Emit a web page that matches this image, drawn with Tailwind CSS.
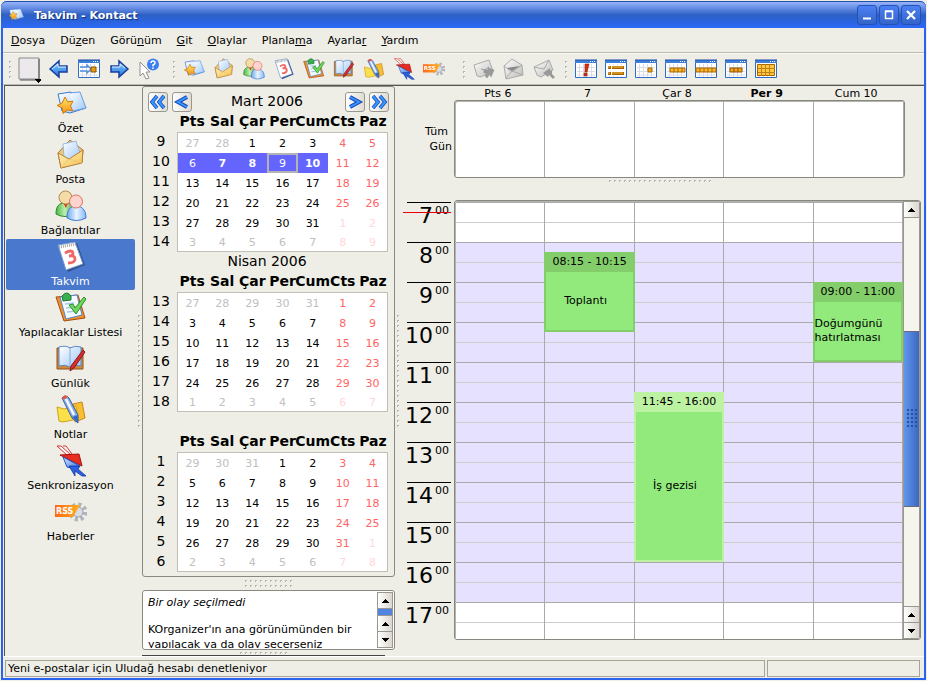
<!DOCTYPE html>
<html lang="tr">
<head>
<meta charset="utf-8">
<title>Takvim - Kontact</title>
<script src="https://cdn.jsdelivr.net/npm/@tailwindcss/browser@4"></script>
</head>
<body class="h-screen overflow-hidden bg-[#eeeee6] p-px text-[11px] leading-[15px] text-black [font-family:'DejaVu_Sans',sans-serif]">

<!-- Shared icon symbols -->
<svg class="absolute size-0" aria-hidden="true">
  <defs>
    <pattern id="dots" width="5" height="5" patternUnits="userSpaceOnUse"><path d="M0 0h2v1h-1v1h-1z" fill="#b4b4ac"/><path d="M1 1h1v1h-1z" fill="#fff"/></pattern>
    <linearGradient id="gBlue" x1="0" y1="0" x2="1" y2="1"><stop offset="0" stop-color="#fff"/><stop offset="1" stop-color="#9cc8f8"/></linearGradient>
    <linearGradient id="gArrow" x1="0" y1="0" x2="0" y2="1"><stop offset="0" stop-color="#8cd0ff"/><stop offset="1" stop-color="#1c74e0"/></linearGradient>
    <linearGradient id="gGold" x1="0" y1="0" x2="1" y2="1"><stop offset="0" stop-color="#fff4c0"/><stop offset="1" stop-color="#f4c050"/></linearGradient>
    <linearGradient id="gStar" x1="0" y1="0" x2="0" y2="1"><stop offset="0" stop-color="#ffe860"/><stop offset="1" stop-color="#f89018"/></linearGradient>
    <linearGradient id="gGreen" x1="0" y1="0" x2="1" y2="0"><stop offset="0" stop-color="#4cb848"/><stop offset=".5" stop-color="#c0f0b0"/><stop offset="1" stop-color="#48a840"/></linearGradient>
    <linearGradient id="gBody" x1="0" y1="0" x2="1" y2="0"><stop offset="0" stop-color="#70a8f0"/><stop offset=".5" stop-color="#e8f4ff"/><stop offset="1" stop-color="#88b8f4"/></linearGradient>
    <linearGradient id="gOrange" x1="0" y1="0" x2="1" y2="0"><stop offset="0" stop-color="#ff6818"/><stop offset="1" stop-color="#ffb020"/></linearGradient>
    <linearGradient id="gGray" x1="0" y1="0" x2="1" y2="1"><stop offset="0" stop-color="#fff"/><stop offset="1" stop-color="#bcbcb8"/></linearGradient>
    <linearGradient id="gSync" x1="0" y1="0" x2="1" y2="1"><stop offset="0" stop-color="#e0f0ff"/><stop offset="1" stop-color="#3070e8"/></linearGradient>
  </defs>

  <symbol id="summary" viewBox="0 0 32 32">
    <path d="M3 6l13-2 2 4 4-2 9 14-16 5-8-2z" fill="url(#gBlue)" stroke="#3a78d0"/>
    <path d="M15 5l10-1 6 16-13 3" fill="url(#gBlue)" stroke="#6a9ce0"/>
    <path d="M10 9l2.600 4.800 5.400-.6-2.600 4.800 2.400 5-5.500-1-4.300 3.500-.7-5.500-5.300-2.500 5.200-2.500z" fill="url(#gStar)" stroke="#d07810"/>
  </symbol>
  <symbol id="mail" viewBox="0 0 32 32">
    <path d="M3 14L15 1l13 10-1 12-21 6z" fill="#f0c878" stroke="#a87838"/>
    <path d="M8 5l13-3 4 12-10 8-6-4z" fill="url(#gBlue)" stroke="#88acdc" stroke-width=".8"/>
    <path d="M3 14l11 6 14-9-1 13-21 5z" fill="url(#gGold)" stroke="#b88038"/>
    <path d="M6 29l8-9 13 4" fill="none" stroke="#ecc068" stroke-width=".8"/>
  </symbol>
  <symbol id="contacts" viewBox="0 0 32 32">
    <path d="M1 24c0-8 3-11 9-11s9 3 9 11q-9 5-18 0z" fill="url(#gGreen)" stroke="#2c8828"/>
    <path d="M8 13l3 5 2-5" fill="#e83820"/>
    <circle cx="10.500" cy="7.500" r="6.500" fill="#f4dca8" stroke="#b88848"/>
    <path d="M12 28c0-8 3-12 9-12s10 4 10 12q-10 5-19 0z" fill="url(#gBody)" stroke="#3c78d8"/>
    <circle cx="21" cy="11.500" r="6.500" fill="#ffd4d0" stroke="#e07060"/>
  </symbol>
  <symbol id="calendar" viewBox="0 0 32 32">
    <path d="M5 5l17-3 8 22-17 7z" fill="#34508c"/>
    <path d="M3 4l17-3 8 22-17 6z" fill="#fff" stroke="#7098d0"/>
    <path d="M4 6l17-3" stroke="#a8a8a8" stroke-width="3" stroke-dasharray="1 1"/>
    <path d="M10 12q7-4 8 0 0 3-4 3 6-1 6 3 0 4-7 4" fill="none" stroke="#f06868" stroke-width="2.800"/>
  </symbol>
  <symbol id="todo" viewBox="0 0 32 32">
    <path d="M1 5l22-2 7 23-21 3z" fill="#f0902c" stroke="#a84c10"/>
    <path d="M5 5l17-2 5 20-16 4z" fill="#f4faff" stroke="#5088d0"/>
    <path d="M10 12l9-1M11 16l10-1M12 20l10-1" stroke="#a8c8e8" stroke-width="1.500"/>
    <path d="M7 4q5-6 9 0v4l-8 1z" fill="#38b050" stroke="#207838"/>
    <path d="M14 13l4-1 2 4 9-11 2 2-10 15z" fill="#70d858" stroke="#2c9030"/>
  </symbol>
  <symbol id="journal" viewBox="0 0 32 32">
    <path d="M2 5h26v21H2z" fill="#d08838" stroke="#905018"/>
    <path d="M4 4q7-2 11 1 5-3 11-1v19q-6-2-11 1-5-3-11-1z" fill="url(#gBlue)" stroke="#5888c8"/>
    <path d="M15 5v19" stroke="#88acd8"/>
    <path d="M28 7l2 2-11 16-4 3 1-5z" fill="#d83030" stroke="#8c1818"/>
  </symbol>
  <symbol id="notes" viewBox="0 0 32 32">
    <path d="M18 10l9-2 3 16-10 4z" fill="#f8c030" stroke="#c88818"/>
    <path d="M2 13l7 2 12-3 2 13-15 3-4-1z" fill="#fce048" stroke="#d0a020"/>
    <path d="M7 4q3-4 7 0l9 17 0 8-6-5z" fill="#88acec" stroke="#3c5c98"/>
    <path d="M11 5l8 16" stroke="#f0f8ff" stroke-width="2.500"/>
    <path d="M7 5q1-5 6-3l-3 3z" fill="#f05038"/>
    <path d="M17 23l6-2v8z" fill="#3868c0"/>
  </symbol>
  <symbol id="sync" viewBox="0 0 32 32">
    <path d="M2 1h4l10 9h-4zM8 1h3l6 8" fill="#fff" stroke="#d83030"/>
    <path d="M5 10l19-1 3 12z" fill="#e82c20" stroke="#a81010"/>
    <path d="M8 12l17 9-3 2-6 0-4-1z" fill="url(#gSync)" stroke="#2050c0"/>
    <path d="M14 21l11 0-2 3 8 7h-4l-7-5v5z" fill="#2c60e0" stroke="#1038a0" stroke-width=".8"/>
  </symbol>
  <symbol id="news" viewBox="0 0 32 32">
    <circle cx="23" cy="16" r="7" fill="none" stroke="#b0b4bc" stroke-width="5" stroke-dasharray="3 2.500"/>
    <circle cx="23" cy="16" r="5" fill="#d8dce4" stroke="#9ca0a8"/>
    <path d="M0 9h25l-7 12H0z" fill="url(#gOrange)"/>
    <text x="1" y="18" font-size="8" font-weight="bold" fill="#fff" font-family="DejaVu Sans">RSS</text>
  </symbol>
  <symbol id="newdoc" viewBox="0 0 24 28"><path d="M2 1h20v21H2z" fill="#ece8ec" stroke="#888"/><path d="M22 2v21H3" fill="none" stroke="#555"/><path d="M18 22h7v1h-1v1h-1v1h-1v1h-1v-1h-1v-1h-1v-1h-1z"/></symbol>
  <symbol id="back" viewBox="0 0 22 22"><path d="M2 11l9-8v5h8v6h-8v5z" fill="url(#gArrow)" stroke="#1c3c9c" stroke-width="1.500"/><path d="M4 11l6-5v3h8" fill="none" stroke="#d8f0ff"/></symbol>
  <symbol id="forward" viewBox="0 0 22 22"><path d="M20 11l-9-8v5H3v6h8v5z" fill="url(#gArrow)" stroke="#1c3c9c" stroke-width="1.500"/><path d="M4 9h8V6l5 4" fill="none" stroke="#d8f0ff"/></symbol>
  <symbol id="frame" viewBox="0 0 22 20"><path d="M.5 1.500h21v17H.5z" fill="#fff" stroke="#2c6cc4"/><path d="M0 1h22v3H0z" fill="#3c80dc"/><path d="M0 1h22" stroke="#1c4ca4"/><path d="M15 2.500h1M17 2.500h1M19 2.500h1" stroke="#fff"/><path d="M4.500 5v13M8.500 5v13M12.500 5v13M16.500 5v13M2 8.500h18M2 12.500h18M2 16h18" stroke="#dcdce4"/></symbol>
  <symbol id="today" viewBox="0 0 22 20"><use href="#frame"/><path d="M2 8h7V6l4 4-4 4v-2H2" fill="none" stroke="#5090e0" stroke-width="1.500"/><path d="M13 8h5v5h-5z" fill="#e89c18" stroke="#885000"/></symbol>
  <symbol id="whatsthis" viewBox="0 0 22 22"><path d="M2 4v14l3-3 3 6 3-1-3-6h4z" fill="#fff" stroke="#909090"/><circle cx="15" cy="6.500" r="6" fill="#3c80f0"/><path d="M13 5q0-2 2-2t2 2q0 1-2 2v1.500M15 9.500v1.500" fill="none" stroke="#fff" stroke-width="1.500"/></symbol>
  <symbol id="gforward" viewBox="0 0 22 22"><path d="M1 7l15-5 4 11-12 6-4-1z" fill="url(#gGray)" stroke="#aaa"/><path d="M8 11l4 1 4-3" fill="none" stroke="#999"/><path d="M11 12h5l-1-2 6 2-3 7-1-3-3 4-2-2 2-3h-3z" fill="#999" stroke="#888" stroke-width=".5"/></symbol>
  <symbol id="gmail" viewBox="0 0 22 22"><path d="M1 8l8-7 10 6 1 10-17 4z" fill="url(#gGray)" stroke="#aaa"/><path d="M1 8l8 6 10-7M3 20l6-7 11 4" fill="none" stroke="#aaa"/><path d="M4 10l13-2-8 5z" fill="#888"/></symbol>
  <symbol id="greply" viewBox="0 0 22 22"><path d="M1 9l15-7 4 10-12 7-4-2z" fill="url(#gGray)" stroke="#aaa"/><path d="M1 9l10 2 5-9" fill="none" stroke="#aaa"/><path d="M10 15l7-5v3l2-1v4l3 3-2 2-4-4-1 2z" fill="#999"/></symbol>
  <symbol id="vnext" viewBox="0 0 22 20"><use href="#frame"/><path d="M10 5h4l-2 8h-2zM9 14h3v3H9z" fill="#e03010" stroke="#801808" stroke-width=".6"/></symbol>
  <symbol id="vlist" viewBox="0 0 22 20"><use href="#frame"/><path d="M2 6h18v11H2z" fill="#fff"/><path d="M3 8.500h3M7 8.500h12M3 14.500h3M7 14.500h12" stroke="#a86400" stroke-width="3"/><path d="M3 8h2M7 8h11M3 14h2M7 14h11" stroke="#fcc040"/></symbol>
  <symbol id="vday" viewBox="0 0 22 20"><use href="#frame"/><path d="M13 9h4v4h-4z" fill="#f0a820" stroke="#a86400"/></symbol>
  <symbol id="vwork" viewBox="0 0 22 20"><use href="#frame"/><path d="M5 9h15v4H5z" fill="#f8b830" stroke="#a86400"/><path d="M9 9v4M13 9v4M17 9v4" stroke="#a86400"/></symbol>
  <symbol id="vweek" viewBox="0 0 22 20"><use href="#frame"/><path d="M1 9h20v4H1z" fill="#f8b830" stroke="#a86400"/><path d="M5 9v4M9 9v4M13 9v4M17 9v4" stroke="#a86400"/></symbol>
  <symbol id="vnextdays" viewBox="0 0 22 20"><use href="#frame"/><path d="M5 9h12v4H5z" fill="#f0a820" stroke="#905000"/><path d="M9 9v4M13 9v4" stroke="#905000"/></symbol>
  <symbol id="vmonth" viewBox="0 0 22 20"><use href="#frame"/><path d="M2.500 5.500h17v11h-17z" fill="#ffc840" stroke="#a86400"/><path d="M6.500 5v12M10.500 5v12M14.500 5v12M3 9.500h17M3 13.500h17" stroke="#c08018"/></symbol>
  <symbol id="chev2" viewBox="0 0 18 18"><path d="M8 3L3 9l5 6M15 3l-5 6 5 6" fill="none" stroke="#1848b8" stroke-width="3.600"/><path d="M8 3L3 9l5 6M15 3l-5 6 5 6" fill="none" stroke="#3898ff" stroke-width="2"/></symbol>
  <symbol id="chev" viewBox="0 0 18 18"><path d="M14 4L5 9l9 5" fill="none" stroke="#1848b8" stroke-width="4"/><path d="M14 4L5 9l9 5" fill="none" stroke="#3898ff" stroke-width="2"/></symbol>
  <symbol id="up" viewBox="0 0 7 4"><path d="M3 0h1v1h1v1h1v1h1v1H0V3h1V2h1V1h1z"/></symbol>
  <symbol id="down" viewBox="0 0 7 4"><path d="M3 4h1V3h1V2h1V1h1V0H0v1h1v1h1v1h1z"/></symbol>
</svg>

<div class="flex h-full flex-col rounded-t-md bg-[#2a62f0]">
  <header class="flex h-[27px] shrink-0 items-center gap-[2px] rounded-t-md border-t border-[#2050a8] bg-linear-to-b from-[#98b4fc] via-[#2c60c4] to-[#2c68f8] pr-[5px] pl-[7px] text-white">
    <svg class="h-[16px] w-[16px]"><use href="#summary"/></svg>
    <h1 class="grow pl-[8px] font-bold [text-shadow:1px_1px_1px_#103080]">Takvim - Kontact</h1>
    <button aria-label="Küçült" class="flex size-[20px] items-center justify-center rounded-[3px] border border-[#2450b8] bg-linear-to-b from-[#4c80f4] to-[#3464c8]"><svg class="size-[12px]"><path d="M2 9.500h8" stroke="#fff" stroke-width="2"/></svg></button>
    <button aria-label="Büyüt" class="flex size-[20px] items-center justify-center rounded-[3px] border border-[#2450b8] bg-linear-to-b from-[#4c80f4] to-[#3464c8]"><svg class="size-[12px]"><path d="M2.500 2.500h7v7h-7zM2 2h8" fill="none" stroke="#fff" stroke-width="1.500"/></svg></button>
    <button aria-label="Kapat" class="flex size-[20px] items-center justify-center rounded-[3px] border border-[#2450b8] bg-linear-to-b from-[#4c80f4] to-[#3464c8]"><svg class="size-[12px]"><path d="M2 2l8 8M10 2l-8 8" stroke="#fff" stroke-width="2.200"/></svg></button>
  </header>

  <div class="mx-[2px] mb-[2px] flex min-h-0 grow flex-col bg-[#eeeee6]">
    <nav class="flex h-[25px] shrink-0 items-center gap-[15px] border-b border-[#bcbcb2] pl-[8px]">
      <button><u>D</u>osya</button><button>Dü<u>z</u>en</button><button>Görü<u>n</u>üm</button><button><u>G</u>it</button><button><u>O</u>laylar</button><button>Planla<u>m</u>a</button><button>Ayarla<u>r</u></button><button><u>Y</u>ardım</button>
    </nav>

    <div id="toolbar" class="flex h-[32px] shrink-0 items-center border-t border-b border-t-[#f8f8f4] border-b-[#bcbcb2]"></div>

    <div class="ml-px flex min-h-0 grow border-t border-l border-[#555]">
      <aside id="sidebar" class="w-[130px] shrink-0 pl-px"></aside>
      <svg class="mr-[2px] ml-[3px] h-[112px] w-[2px] shrink-0 self-center overflow-hidden"><rect width="2" height="112" fill="url(#dots)"/></svg>

      <section class="flex w-[253px] shrink-0 flex-col">
        <div id="months" class="shrink-0 rounded-[3px] border border-[#888a80] px-[2px] pt-[5px] pb-[4px]"></div>
        <svg class="my-[3px] h-[7px] w-[47px] shrink-0 self-center"><rect width="47" height="7" fill="url(#dots)"/></svg>
        <div class="flex min-h-0 grow overflow-hidden rounded-[3px] border border-[#888a80] bg-white p-px">
          <div class="h-full grow overflow-hidden pt-[3px] pl-[4px]">
            <p class="mb-[12px] italic">Bir olay seçilmedi</p>
            <p>KOrganizer'ın ana görünümünden bir yapılacak ya da olay seçerseniz</p>
          </div>
          <div class="flex w-[16px] shrink-0 flex-col border border-[#989890] bg-[#989890]">
            <button aria-label="Yukarı" class="flex h-[15px] shrink-0 items-center justify-center bg-linear-to-r from-white to-[#dcd6ce]"><svg class="h-[4px] w-[7px]"><use href="#up"/></svg></button>
            <div class="my-px grow bg-[#5084e0]"></div>
            <button aria-label="Yukarı" class="mb-px flex h-[15px] shrink-0 items-center justify-center bg-linear-to-r from-white to-[#dcd6ce]"><svg class="h-[4px] w-[7px]"><use href="#up"/></svg></button>
            <button aria-label="Aşağı" class="flex h-[15px] shrink-0 items-center justify-center bg-linear-to-r from-white to-[#dcd6ce]"><svg class="h-[4px] w-[7px]"><use href="#down"/></svg></button>
          </div>
        </div>
        <div class="mr-[10px] flex h-[6px] shrink-0 justify-center border-b border-[#444] pt-[2px]"><svg class="h-[2px] w-[47px]"><rect width="47" height="2" fill="url(#dots)"/></svg></div>
      </section>

      <svg class="mr-px ml-[2px] h-[112px] w-[2px] shrink-0 self-center overflow-hidden"><rect width="2" height="112" fill="url(#dots)"/></svg>

      <main class="flex min-w-0 grow flex-col pr-[3px] pb-[16px]">
        <div class="mr-[20px] ml-[53px] grid h-[14px] shrink-0 grid-cols-5 text-center leading-[16px]">
          <span>Pts 6</span><span>7</span><span>Çar 8</span><b>Per 9</b><span>Cum 10</span>
        </div>
        <div class="mr-[16px] flex h-[78px] shrink-0">
          <div class="flex w-[54px] shrink-0 flex-col items-end justify-center pr-[2px]"><span class="pr-[4px]">Tüm</span><span>Gün</span></div>
          <div class="grid grow grid-cols-5 rounded-[3px] border border-[#85887e] bg-white shadow-[inset_1px_1px_0_#b4b4ac]">
            <div class="border-r border-[#aaa]"></div><div class="border-r border-[#aaa]"></div><div class="border-r border-[#aaa]"></div><div class="border-r border-[#aaa]"></div><div class="border-r border-[#aaa]"></div>
          </div>
        </div>
        <svg class="mt-[2px] mb-[18px] h-[2px] w-[104px] shrink-0 self-center"><rect width="104" height="2" fill="url(#dots)"/></svg>
        <div class="flex min-h-0 grow">
          <div class="relative w-[54px] shrink-0 overflow-hidden pt-[2px] pr-[3px] pl-[7px]">
            <div id="hours"></div>
            <div class="absolute top-[12px] right-[3px] left-[3px] h-px bg-red-600"></div>
          </div>
          <div class="flex min-w-0 grow overflow-hidden rounded-[3px] border border-[#85887e] bg-white">
            <div id="agenda" class="grid min-w-0 grow grid-cols-5 overflow-hidden border-t border-l border-[#b4b4ac]"></div>
            <div class="flex w-[17px] shrink-0 flex-col border-x border-t border-[#989890] bg-[#f5f5ee]">
              <button aria-label="Yukarı" class="flex h-[16px] shrink-0 items-center justify-center border-b border-[#989890] bg-linear-to-r from-white to-[#dcd6ce]"><svg class="h-[4px] w-[7px]"><use href="#up"/></svg></button>
              <div class="grow-[113] basis-0"></div>
              <div class="flex h-[176px] shrink-0 items-center justify-center border-y border-[#686878] bg-linear-to-r from-[#6096ec] to-[#3c68c0]"><svg class="h-[20px] w-[12px]"><path d="M1 1h11M1 5h11M1 9h11M1 13h11M1 17h11" stroke="#2850a0" stroke-width="2" stroke-dasharray="2 2"/></svg></div>
              <div class="grow-[99] basis-0"></div>
              <button aria-label="Yukarı" class="flex h-[17px] shrink-0 items-center justify-center border-y border-[#989890] bg-linear-to-r from-white to-[#dcd6ce]"><svg class="h-[4px] w-[7px]"><use href="#up"/></svg></button>
              <button aria-label="Aşağı" class="flex h-[16px] shrink-0 items-center justify-center border-b border-[#989890] bg-linear-to-r from-white to-[#dcd6ce]"><svg class="h-[4px] w-[7px]"><use href="#down"/></svg></button>
            </div>
          </div>
        </div>
      </main>
    </div>

    <footer class="flex h-[22px] shrink-0 gap-[2px] border-t border-white pt-[3px] pr-[4px] pb-px pl-[2px]">
      <div class="grow border border-[#a4a49a] px-[2px]">Yeni e-postalar için Uludağ hesabı denetleniyor</div>
      <div class="w-[153px] shrink-0 border border-[#a4a49a]"></div>
    </footer>
  </div>
</div>

<script>
const el = id => document.getElementById(id);

// Toolbar
const cell = (id, label, cls) => `<button aria-label="${label}" class="flex w-[30px] shrink-0 items-center justify-center"><svg class="${cls}"><use href="#${id}"/></svg></button>`;
const grip = cls => `<svg class="h-[17px] w-[2px] shrink-0 ${cls}"><rect width="2" height="17" fill="url(#dots)"/></svg>`;
const M = 'size-[22px]', W = 'h-[20px] w-[22px]';
el('toolbar').innerHTML =
  grip('mr-[3px] ml-[6px]') +
  cell('newdoc', 'Yeni', 'h-[28px] w-[24px] mt-[4px]') + cell('back', 'Geri', M) + cell('today', 'Bugün', W) + cell('forward', 'İleri', M) + cell('whatsthis', 'Bu nedir?', M) +
  grip('mr-[4px] ml-[9px]') +
  [['summary', 'Özet'], ['mail', 'Posta'], ['contacts', 'Bağlantılar'], ['calendar', 'Takvim'], ['todo', 'Yapılacaklar'], ['journal', 'Günlük'], ['notes', 'Notlar'], ['sync', 'Senkronizasyon'], ['news', 'Haberler']].map(([i, l]) => cell(i, l, M)).join('') +
  grip('mr-[4px] ml-[14px]') +
  cell('gforward', 'İlet', M) + cell('gmail', 'Posta', M) + cell('greply', 'Yanıtla', M) +
  grip('mr-[4px] ml-[6px]') +
  [['vnext', 'Sıradaki'], ['vlist', 'Liste'], ['vday', 'Gün'], ['vwork', 'İş haftası'], ['vweek', 'Hafta'], ['vnextdays', 'Sonraki günler'], ['vmonth', 'Ay']].map(([i, l]) => cell(i, l, W)).join('');

// Sidebar
el('sidebar').innerHTML = [['summary', 'Özet'], ['mail', 'Posta'], ['contacts', 'Bağlantılar'], ['calendar', 'Takvim'], ['todo', 'Yapılacaklar Listesi'], ['journal', 'Günlük'], ['notes', 'Notlar'], ['sync', 'Senkronizasyon'], ['news', 'Haberler']]
  .map(([i, l]) => `<a href="#${i}" class="flex h-[51px] flex-col items-center gap-px rounded-[2px] pt-[2px] whitespace-nowrap ${l === 'Takvim' ? 'bg-[#4a78cc] text-white' : ''}"><svg class="size-[32px] shrink-0"><use href="#${i}"/></svg>${l}</a>`).join('');

// Month navigators: [title, first week, days before the 1st, previous month's length, length]
const nav = (id, label, cls) => `<button aria-label="${label}" class="flex size-[20px] items-center justify-center rounded-[3px] border border-[#98988e] bg-linear-to-r from-white to-[#e0dcd4]"><svg class="size-[18px] ${cls}"><use href="#${id}"/></svg></button>`;
el('months').innerHTML = [['Mart 2006', 9, 2, 28, 31], ['Nisan 2006', 13, 5, 31, 30], ['', 1, 3, 31, 31]].map(([title, week, lead, prev, len], m) => {
  let rows = '';
  for (let r = 0; r < 6; r++) {
    rows += `<tr class="${r === 0 ? 'h-[21px]' : r === 5 ? 'h-[19px]' : 'h-[20px]'}"><th class="p-0 pb-[3px] text-[14px] font-normal">${m === 2 ? r + 1 : week + r}</th>`;
    for (let c = 0; c < 7; c++) {
      const n = r * 7 + c - lead + 1;
      const out = n < 1 || n > len;
      const day = n < 1 ? prev + n : n > len ? n - len : n;
      const sel = m === 0 && r === 1 && c < 5;
      const color = sel ? 'bg-[#6464ff] text-white' : c > 4 ? (out ? 'bg-white text-[#ffd8d8]' : 'bg-white text-[#ff6464]') : (out ? 'bg-white text-[#c0c0c0]' : 'bg-white');
      const edge = (c === 0 ? ' border-l' : '') + (c === 6 ? ' border-r' : '') + (r === 0 ? ' border-t' : '') + (r === 5 ? ' border-b' : '');
      const mark = sel && c === 3 ? ' shadow-[inset_0_0_0_2px_#b4b4b4]' : '';
      const bold = sel && c !== 0 && c !== 3 ? ' font-bold' : '';
      rows += `<td class="border-[#c0c0b8] p-0 pt-px ${r === 5 ? 'leading-[17px]' : 'leading-[18px]'} ${color}${edge}${mark}${bold}">${day}</td>`;
    }
    rows += '</tr>';
  }
  const heads = ['Pts', 'Sal', 'Çar', 'Per', 'Cum', 'Cts', 'Paz'].map(d => `<th class="p-0 pb-px"><span class="-mx-2 block">${d}</span></th>`).join('');
  return `<div class="flex h-[19px] items-center gap-[4px] px-[3px]">${m === 0 ? nav('chev2', 'Önceki yıl', '') + nav('chev', 'Önceki ay', '') : ''}<h2 class="grow pr-[3px] text-center text-[14px]">${title}</h2>${m === 0 ? nav('chev', 'Sonraki ay', 'rotate-180') + nav('chev2', 'Sonraki yıl', 'rotate-180') : ''}</div>
  <table class="w-[243px] table-fixed border-separate border-spacing-0 text-center"><thead><tr class="h-[21px] text-[14px] whitespace-nowrap"><th class="w-[32px] p-0"></th>${heads}</tr></thead><tbody>${rows}</tbody></table>`;
}).join('');

// Hour ruler
el('hours').innerHTML = [7, 8, 9, 10, 11, 12, 13, 14, 15, 16, 17].map(h => `<div class="flex h-[40px] justify-end gap-[2px] border-t border-black pr-[2px]"><span class="text-[22px] leading-[26px]">${h}</span><span class="leading-[15px]">00</span></div>`).join('');

// Agenda columns; 40px per hour, starting at 07:00
const events = {
  1: { from: 8.25, to: 10.25, time: '08:15 - 10:15', text: 'Toplantı', box: 'border-[#83cd6a]', head: 'bg-[#83cd6a]', align: 'justify-center pr-[8px]' },
  2: { from: 11.75, to: 16, time: '11:45 - 16:00', text: 'İş gezisi', box: 'border-[#bdf2a3]', head: 'bg-[#bdf2a3]', align: 'justify-center pr-[8px]' },
  4: { from: 9, to: 11, time: '09:00 - 11:00', text: 'Doğumgünü hatırlatması', box: 'border-[#83cd6a]', head: 'bg-[#83cd6a]', align: '' }
};
el('agenda').innerHTML = [0, 1, 2, 3, 4].map(c => {
  let slots = '';
  for (let i = 0; i < 22; i++) slots += `<div class="h-[20px] border-t ${i % 2 ? 'border-[#ccc]' : 'border-[#aaa]'} ${i > 1 && i < 20 ? 'bg-[#e6e1ff]' : 'bg-white'}"></div>`;
  const e = events[c];
  const ev = e ? `<article class="absolute -right-px -left-px flex flex-col border-2 ${e.box} bg-[#93ea7c]" style="top:${(e.from - 7) * 40}px;height:${(e.to - e.from) * 40}px"><header class="h-[18px] shrink-0 text-center leading-[16px] ${e.head}">${e.time}</header><p class="flex grow items-center leading-[14px] ${e.align}">${e.text}</p></article>` : '';
  return `<div class="relative min-w-0 border-r border-[#aaa]">${slots}${ev}</div>`;
}).join('');
</script>
</body>
</html>
